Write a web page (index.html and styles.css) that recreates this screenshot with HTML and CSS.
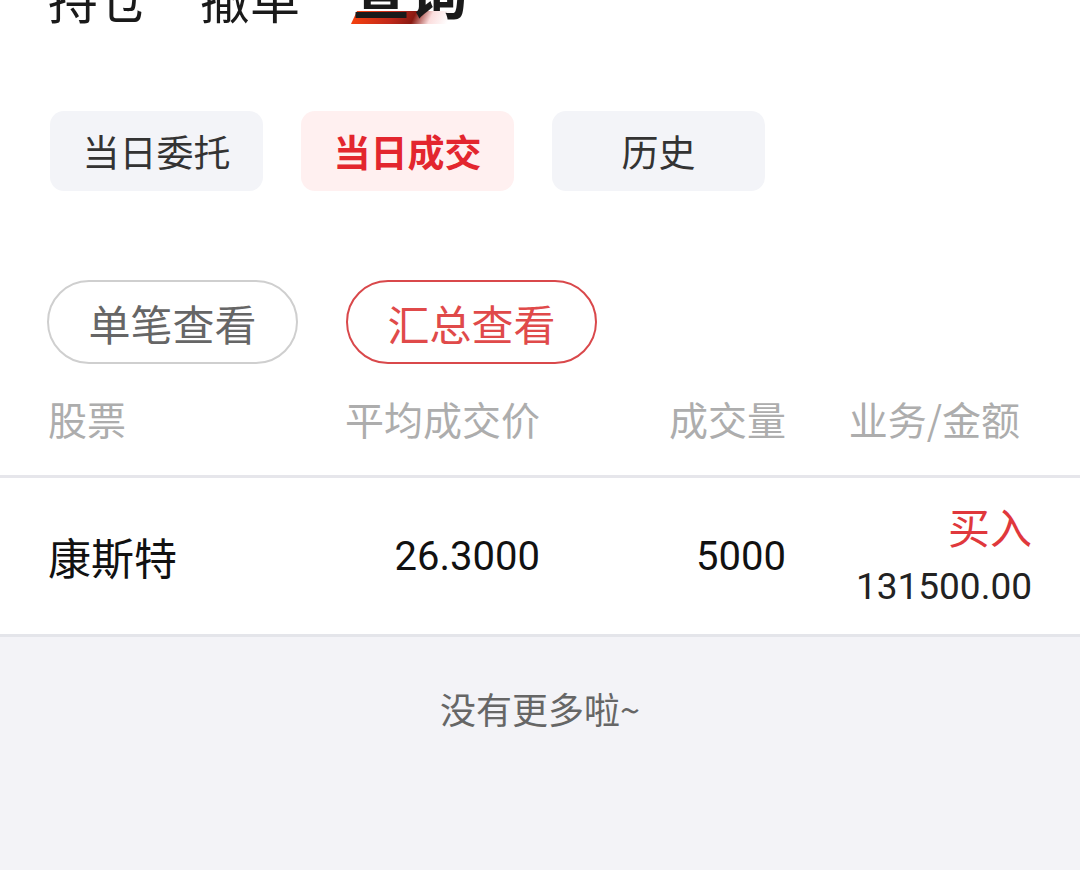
FILE: index.html
```html
<!DOCTYPE html>
<html lang="zh-CN">
<head>
  <meta charset="UTF-8" />
  <meta name="viewport" content="width=device-width, initial-scale=1.0" />
  <title>查询</title>
  <link rel="stylesheet" href="styles.css">
</head>
<body>
  <div class="page">
    <div class="main-tabs">
      <div class="main-tab">持仓</div>
      <div class="main-tab">撤单</div>
      <div class="main-tab active"><span class="mark"></span><span class="label">查询</span></div>
    </div>

    <div class="seg">
      <div class="seg-item">当日委托</div>
      <div class="seg-item active">当日成交</div>
      <div class="seg-item">历史</div>
    </div>

    <div class="pills">
      <div class="pill">单笔查看</div>
      <div class="pill active">汇总查看</div>
    </div>

    <div class="table-head">
      <div class="col-name">股票</div>
      <div class="col-num">平均成交价</div>
      <div class="col-num">成交量</div>
      <div class="col-num col-last">业务/金额</div>
    </div>

    <div class="row">
      <div class="col-name name">康斯特</div>
      <div class="col-num num">26.3000</div>
      <div class="col-num num">5000</div>
      <div class="col-num biz">
        <span class="side buy">买入</span>
        <span class="amount">131500.00</span>
      </div>
    </div>

    <div class="footer">
      <div class="no-more">没有更多啦~</div>
    </div>
  </div>
</body>
</html>
```

FILE: styles.css
```css
* {
  box-sizing: border-box;
  margin: 0;
  padding: 0;
}

body {
  background: #fff;
  font-family: 'Noto Sans CJK SC', 'Noto Sans', sans-serif;
  color: #111;
  overflow: hidden;
}

.page {
  width: 1080px;
  height: 870px;
  display: flex;
  flex-direction: column;
}

/* top tabs, cut off by the screen edge */
.main-tabs {
  display: flex;
  align-items: flex-end;
  gap: 52px;
  padding-left: 48px;
  height: 24px;
  overflow: hidden;
}

.main-tab {
  font-size: 50px;
  line-height: 1;
  color: #1a1a1a;
  margin-bottom: 2px;
}

.main-tab.active {
  position: relative;
  font-size: 58px;
  font-weight: bold;
  margin-bottom: 6px;
}

.main-tab .label {
  position: relative;
}

.main-tab .mark {
  position: absolute;
  left: 2px;
  bottom: -6px;
  width: 96px;
  height: 13px;
  transform: skewX(-25deg);
  background: linear-gradient(90deg, #f4400f 0%, #c0281a 40%, #8a1a12 62%, rgba(240, 120, 120, 0.25) 80%, rgba(255, 255, 255, 0) 100%);
}

/* segment buttons */
.seg {
  display: flex;
  gap: 38px;
  padding-left: 50px;
  margin-top: 87px;
}

.seg-item {
  width: 213px;
  height: 80px;
  border-radius: 14px;
  background: #f3f4f8;
  display: flex;
  align-items: center;
  justify-content: center;
  font-size: 37px;
  color: #333;
}

.seg-item.active {
  background: #fff0f0;
  color: #e3262e;
  font-weight: bold;
}

/* outline pills */
.pills {
  display: flex;
  gap: 48px;
  padding-left: 47px;
  margin-top: 89px;
}

.pill {
  width: 251px;
  height: 84px;
  border: 2px solid #cfcfcf;
  border-radius: 42px;
  display: flex;
  align-items: center;
  justify-content: center;
  font-size: 42px;
  color: #666;
}

.pill.active {
  border-color: #d9484b;
  color: #e04a4a;
}

/* table */
.table-head,
.row {
  display: grid;
  grid-template-columns: 1fr 248px 246px 246px;
  padding: 0 48px;
  align-items: center;
}

.table-head {
  height: 114px;
  border-bottom: 3px solid #e6e6eb;
  padding-bottom: 4px;
  font-size: 39px;
  color: #adadad;
}

.col-num {
  text-align: right;
}

.col-last {
  padding-right: 12px;
}

.row {
  height: 159px;
  border-bottom: 3px solid #e4e5ea;
}

.name {
  font-size: 43px;
  color: #111;
}

.num {
  font-family: Roboto, 'Noto Sans', sans-serif;
  font-size: 40px;
  color: #111;
}

.biz {
  display: flex;
  flex-direction: column;
  align-items: flex-end;
}

.side {
  font-size: 42px;
  line-height: 1.2;
}

.buy {
  color: #e0383c;
}

.amount {
  font-family: Roboto, 'Noto Sans', sans-serif;
  font-size: 37px;
  line-height: 1.3;
  margin-top: 11px;
  color: #222;
}

.footer {
  flex: 1;
  background: #f3f3f7;
}

.no-more {
  text-align: center;
  font-size: 36px;
  color: #666;
  margin-top: 45px;
}
```
